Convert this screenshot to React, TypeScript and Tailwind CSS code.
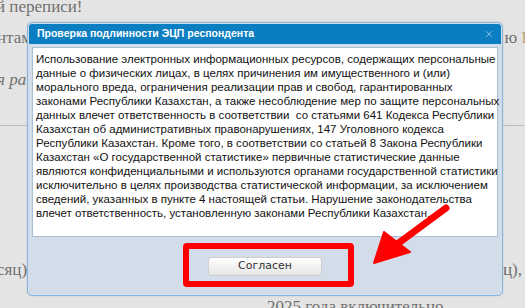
import { X } from 'lucide-react';

const bodyLines = [
  'Использование электронных информационных ресурсов, содержащих персональные',
  'данные о физических лицах, в целях причинения им имущественного и (или)',
  'морального вреда, ограничения реализации прав и свобод, гарантированных',
  'законами Республики Казахстан, а также несоблюдение мер по защите персональных',
  'данных влечет ответственность в соответствии  со статьями 641 Кодекса Республики',
  'Казахстан об административных правонарушениях, 147 Уголовного кодекса',
  'Республики Казахстан. Кроме того, в соответствии со статьей 8 Закона Республики',
  'Казахстан «О государственной статистике» первичные статистические данные',
  'являются конфиденциальными и используются органами государственной статистики',
  'исключительно в целях производства статистической информации, за исключением',
  'сведений, указанных в пункте 4 настоящей статьи. Нарушение законодательства',
  'влечет ответственность, установленную законами Республики Казахстан.',
];

function PageBehind() {
  return (
    <div className="flex flex-col text-[17px] leading-[20px] text-[#707070] font-['Liberation_Serif',serif]">
      <div className="ml-[-4px] mt-[-3px]">й переписи!</div>
      <div className="mt-[11px] flex justify-between">
        <span className="ml-[-3px]">нтами</span>
        <span className="mr-[-2px]">
          ю <span className="text-[#b8a878]">I</span>
        </span>
      </div>
      <div className="mt-[22px] italic ml-[-3px]">я ра</div>
      <div className="mt-[35px] h-px bg-[#bdbdbd]" />
      <div className="mt-[134px] flex justify-between">
        <span className="ml-[-3px]">сяц)</span>
        <span className="mr-[3px]">ц),</span>
      </div>
      <div className="mt-[17px] ml-[267px]">2025 года включительно.</div>
    </div>
  );
}

function Arrow() {
  return (
    <svg
      className="absolute left-[360px] top-[195px] pointer-events-none"
      width="100"
      height="80"
      viewBox="360 195 100 80"
    >
      <line x1="446" y1="208" x2="396" y2="245" stroke="#ff0000" strokeWidth="7" strokeLinecap="round" />
      <polygon points="374,263 384,232 410,252" fill="#ff0000" stroke="#ff0000" strokeWidth="2" strokeLinejoin="round" />
    </svg>
  );
}

export default function App() {
  return (
    <div className="relative w-[525px] h-[308px] overflow-hidden bg-[#e4e4e4]">
      <PageBehind />

      <div className="absolute left-[27px] top-[22px] w-[476px] h-[274px] flex flex-col rounded-[5px] border border-[#86b5de] bg-[#d3dde9] shadow-[0_0_2px_rgba(0,0,0,0.15)] overflow-hidden">
        <div className="h-[20px] mt-[1px] mx-px flex items-center justify-between bg-[#0b7ec1] pl-[8px] pr-[7px] rounded-t-[3px]">
          <span className="text-white font-bold text-[10.5px] font-['Liberation_Sans',sans-serif]">
            Проверка подлинности ЭЦП респондента
          </span>
          <X className="w-[10px] h-[10px] text-[#cfe2f1]" strokeWidth={1.5} />
        </div>

        <div className="mt-[3px] mx-[4px] h-[190px] border border-[#a9bfd6] bg-white px-[3px] pt-[4px] font-['Liberation_Sans',sans-serif] text-[11.5px] leading-[14px] text-[#111]">
          {bodyLines.map((line, i) => (
            <div key={i} className="whitespace-pre">
              {line}
            </div>
          ))}
        </div>

        <div className="flex-1 flex items-center justify-center">
          <button className="w-[114px] h-[19px] rounded-[3px] border border-[#cfcfcf] bg-gradient-to-b from-white to-[#e6e6e6] text-[11px] text-[#333] font-['DejaVu_Sans',sans-serif]">
            Согласен
          </button>
        </div>
      </div>

      <div className="absolute left-[183px] top-[243px] w-[171px] h-[44px] rounded-[4px] border-[6px] border-[#ff0000]" />
      <Arrow />
    </div>
  );
}
